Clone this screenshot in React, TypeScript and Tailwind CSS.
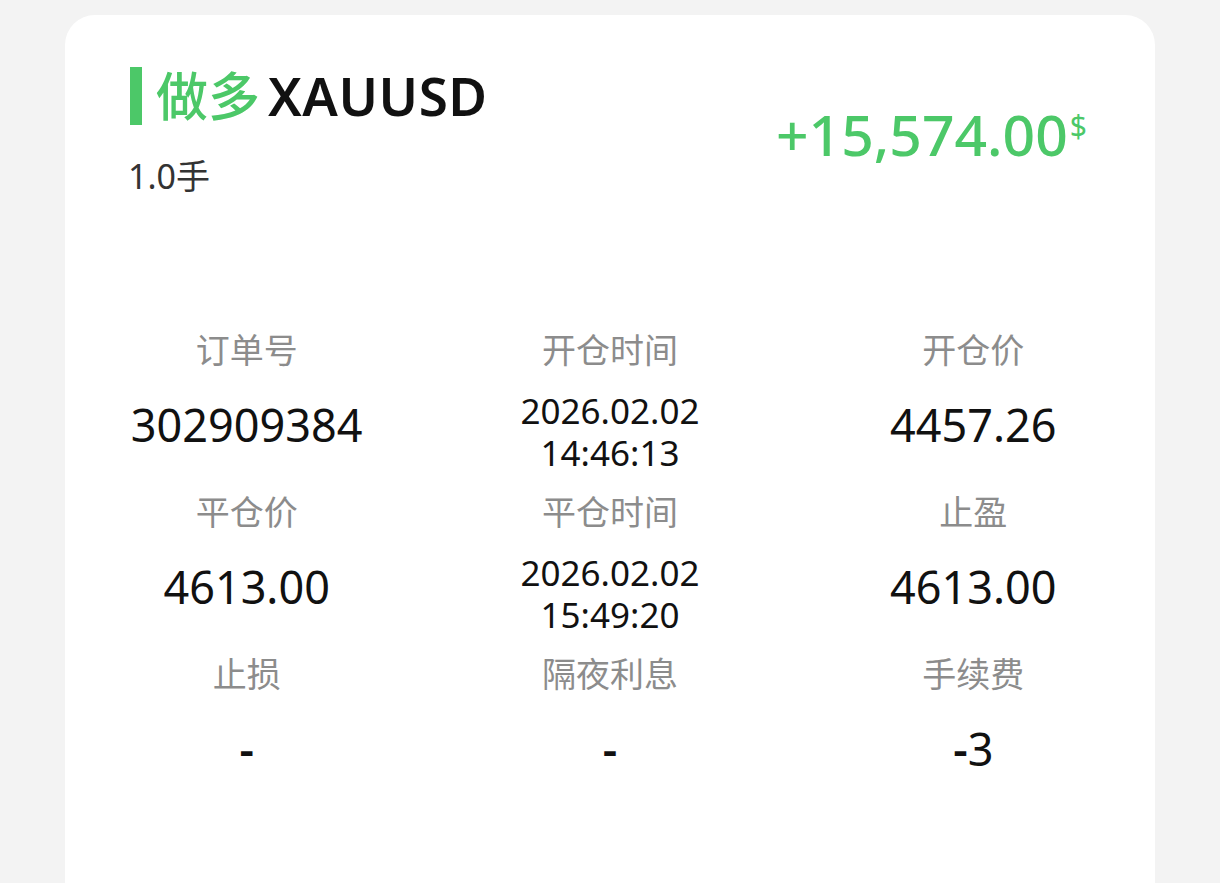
import React from "react";

type Cell = { label: string; value: string[] };

const cells: Cell[] = [
  { label: "订单号", value: ["302909384"] },
  { label: "开仓时间", value: ["2026.02.02", "14:46:13"] },
  { label: "开仓价", value: ["4457.26"] },
  { label: "平仓价", value: ["4613.00"] },
  { label: "平仓时间", value: ["2026.02.02", "15:49:20"] },
  { label: "止盈", value: ["4613.00"] },
  { label: "止损", value: ["-"] },
  { label: "隔夜利息", value: ["-"] },
  { label: "手续费", value: ["-3"] },
];

const font = "font-['Noto_Sans','Noto_Sans_CJK_SC',sans-serif]";

// the dash in the reference is heavier than the digits next to it
const renderValue = (text: string) => {
  if (!text.startsWith("-")) return text;
  return (
    <>
      <span className="font-semibold">-</span>
      {text.slice(1)}
    </>
  );
};

const DetailCell = ({ label, value }: Cell) => {
  return (
    <div className="flex flex-col items-center">
      <div className="h-[44px] text-[34px] leading-[44px] text-[#8c8c8c]">{label}</div>
      <div className="mt-[18px] h-[84px] text-center text-[#111]">
        {value.length > 1 ? (
          value.map((line) => (
            <div key={line} className="text-[35px] leading-[42px]">
              {line}
            </div>
          ))
        ) : (
          <div className="text-[45px] leading-[70px]">{renderValue(value[0])}</div>
        )}
      </div>
    </div>
  );
};

export default function App() {
  return (
    <div className={`h-[883px] w-[1220px] overflow-hidden bg-[#f3f3f3] pl-[65px] pt-[15px] ${font}`}>
      <div className="h-[900px] w-[1090px] rounded-[30px] bg-white">
        <div className="flex justify-between pl-[65px] pr-[68px] pt-[37px]">
          <div>
            <div className="flex h-[88px] items-center">
              <span className="h-[58px] w-[12px] bg-[#4cc868]" />
              <span className="ml-[14px] text-[52px] font-medium text-[#4cc868]">做多</span>
              <span className="ml-[8px] text-[53px] font-semibold tracking-[0.5px] text-[#111]">XAUUSD</span>
            </div>
            <div className="-ml-[2px] mt-[14px] text-[34px] leading-[44px] text-[#333]">1.0手</div>
          </div>
          <div className="flex items-start pt-[44px] text-[#4cc868]">
            <span className="text-[57px] font-medium leading-[76px]">+15,574.00</span>
            <span className="ml-[2px] mt-[14px] text-[30px] leading-[32px]">$</span>
          </div>
        </div>
        <div className="mt-[130px] grid grid-cols-3 gap-y-[16px]">
          {cells.map((c) => (
            <DetailCell key={c.label} label={c.label} value={c.value} />
          ))}
        </div>
      </div>
    </div>
  );
}
